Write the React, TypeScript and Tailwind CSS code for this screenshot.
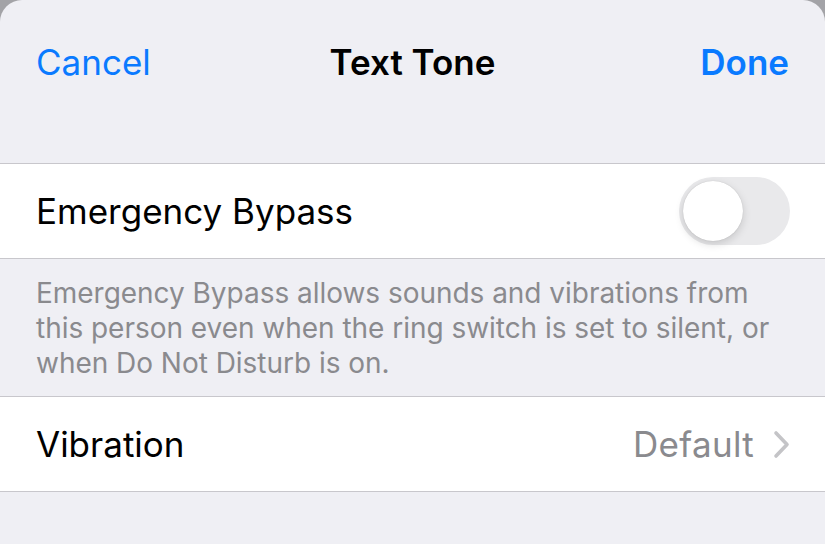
import React from "react";

const font = { fontFamily: "Inter, 'Noto Sans', sans-serif" };

function Toggle() {
  return (
    <div className="flex h-[68px] w-[111px] items-center rounded-full bg-[#e9e9eb] px-[4px]">
      <div className="h-[60px] w-[60px] rounded-full bg-white shadow-[0_3px_8px_rgba(0,0,0,0.15),0_0_1px_rgba(0,0,0,0.2)]" />
    </div>
  );
}

function Chevron() {
  return (
    <svg width="17" height="29" viewBox="0 0 17 29" fill="none">
      <path
        d="M3 3 L14 14.5 L3 26"
        stroke="#c4c4c7"
        strokeWidth="3.6"
        strokeLinecap="round"
        strokeLinejoin="round"
      />
    </svg>
  );
}

export default function App() {
  return (
    <div className="h-[544px] w-[825px] overflow-hidden bg-[#a3a3a7]" style={font}>
      <div className="flex h-full flex-col rounded-t-[22px] bg-[#efeff4]">
        {/* nav bar */}
        <div className="grid h-[124px] grid-cols-3 items-center px-[36px]">
          <span className="text-[35px] text-[#0a7aff]">Cancel</span>
          <span className="text-center text-[35px] font-semibold text-black">Text Tone</span>
          <span className="text-right text-[35px] font-semibold text-[#0a7aff]">Done</span>
        </div>

        <div className="mt-[39px] flex h-[96px] items-center justify-between border-y border-[#c8c7cc] bg-white pl-[36px] pr-[35px]">
          <span className="text-[35px] text-black">Emergency Bypass</span>
          <Toggle />
        </div>

        <p className="whitespace-nowrap px-[36px] pb-[15px] pt-[17px] text-[28px] leading-[35px] tracking-[-0.03px] text-[#8a8a8e]">
          Emergency Bypass allows sounds and vibrations from
          <br />
          this person even when the ring switch is set to silent, or
          <br />
          when Do Not Disturb is on.
        </p>

        <div className="flex h-[96px] items-center justify-between border-y border-[#c8c7cc] bg-white pl-[36px] pr-[35px]">
          <span className="text-[35px] text-black">Vibration</span>
          <div className="flex items-center gap-[19px]">
            <span className="text-[35px] tracking-[0.3px] text-[#8a8a8e]">Default</span>
            <Chevron />
          </div>
        </div>
      </div>
    </div>
  );
}
